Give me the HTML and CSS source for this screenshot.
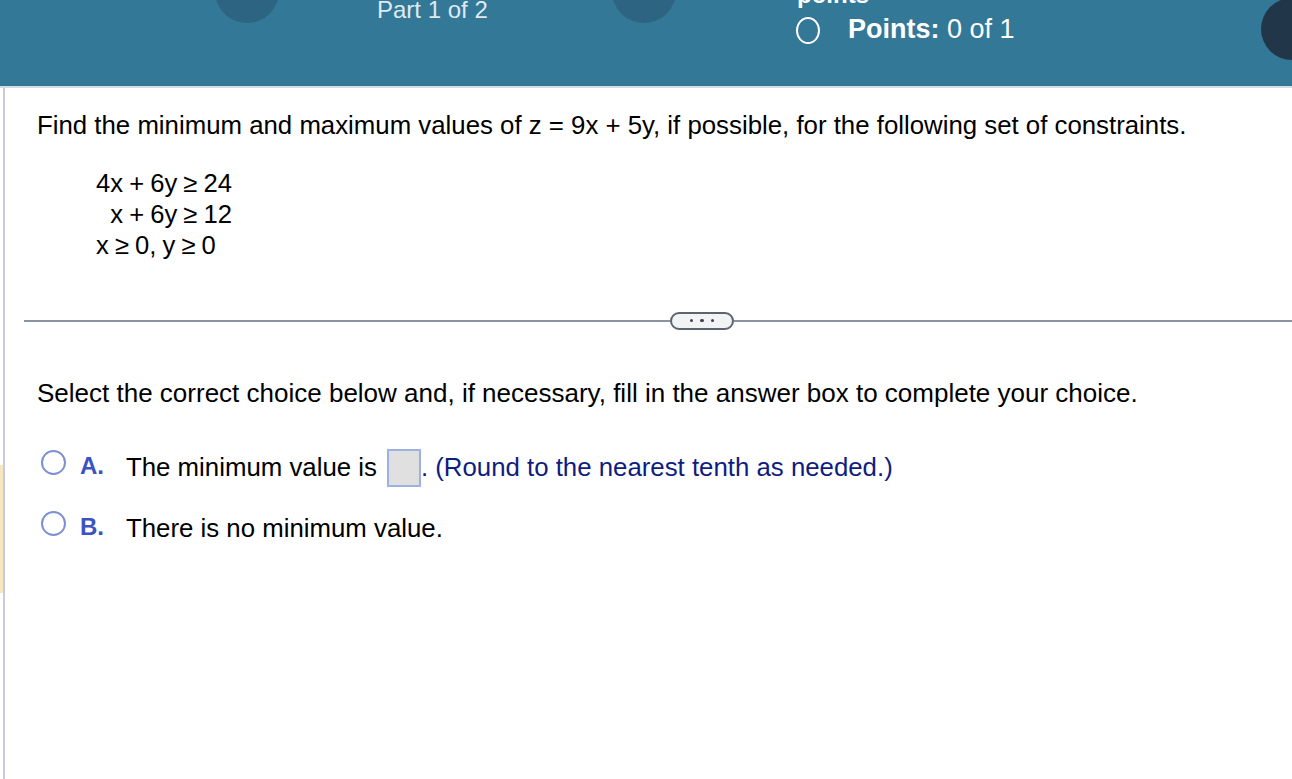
FILE: index.html
```html
<!DOCTYPE html>
<html>
<head>
<meta charset="utf-8">
<link rel="stylesheet" href="styles.css">
</head>
<body>
<div class="header">
  <div class="nav-circle first"></div>
  <div class="part">Part 1 of 2</div>
  <div class="nav-circle second"></div>
  <div class="points-block">
    <div class="points-cut">points</div>
    <div class="points-row">
      <span class="ring"></span>
      <span class="points-text"><b>Points:</b> 0 of 1</span>
    </div>
  </div>
  <div class="dark-circle"></div>
</div>
<div class="page">
  <div class="marker"></div>
  <p class="question">Find the minimum and maximum values of z = 9x + 5y, if possible, for the following set of constraints.</p>
  <div class="constraints">
    <div class="c-right">4x + 6y ≥ 24</div>
    <div class="c-right">x + 6y ≥ 12</div>
    <div class="c-left">x ≥ 0, y ≥ 0</div>
  </div>
  <div class="divider">
    <div class="line short"></div>
    <div class="pill"><span class="dot"></span><span class="dot"></span><span class="dot"></span></div>
    <div class="line long"></div>
  </div>
  <p class="instruction">Select the correct choice below and, if necessary, fill in the answer box to complete your choice.</p>
  <div class="option opt-a">
    <span class="radio"></span>
    <span class="label">A.</span>
    <span class="otext">The minimum value is <span class="answer"></span><span class="hint">. (Round to the nearest tenth as needed.)</span></span>
  </div>
  <div class="option opt-b">
    <span class="radio"></span>
    <span class="label">B.</span>
    <span class="otext">There is no minimum value.</span>
  </div>
</div>
</body>
</html>
```

FILE: styles.css
```css
* { box-sizing: border-box; }
html, body { margin: 0; padding: 0; background: #ffffff; }
body {
  font-family: "Liberation Sans", Arial, sans-serif;
  color: #000;
  width: 1292px;
  height: 779px;
  overflow: hidden;
}
.header {
  height: 88px;
  background: #337896;
  border-bottom: 2px solid #d3dde4;
  display: flex;
  align-items: flex-start;
  overflow: hidden;
}
.nav-circle {
  width: 64px;
  height: 64px;
  border-radius: 50%;
  background: #2c6482;
  margin-top: -41px;
  flex: none;
}
.nav-circle.first { margin-left: 215px; }
.nav-circle.second { margin-left: 125px; }
.part {
  margin-left: 98px;
  margin-top: -2px;
  font-size: 24px;
  line-height: 24px;
  color: #dfe9f1;
  width: 200px;
  flex: none;
  margin-right: -90px;
  white-space: nowrap;
}
.points-block {
  margin-left: 108px;
  display: flex;
  flex-direction: column;
  flex: none;
}
.points-cut {
  font-size: 24px;
  line-height: 24px;
  height: 24px;
  margin-top: -17px;
  margin-left: 13px;
  color: #ffffff;
  font-weight: bold;
}
.points-row {
  display: flex;
  align-items: center;
  margin-top: 7px;
}
.ring {
  width: 24px;
  height: 27px;
  border: 2.5px solid #ffffff;
  border-radius: 50%;
  margin-left: 12px;
  margin-top: 3px;
}
.points-text {
  margin-left: 28px;
  font-size: 27px;
  line-height: 30px;
  color: #ffffff;
  white-space: nowrap;
}
.dark-circle {
  margin-left: auto;
  margin-right: -31px;
  margin-top: -2px;
  width: 62px;
  height: 62px;
  border-radius: 50%;
  background: #22364a;
  flex: none;
}
.page {
  position: relative;
  margin-left: 3px;
  border-left: 2px solid #c9ccd8;
  height: 691px;
  padding-top: 22px;
}
.marker {
  position: absolute;
  left: -5px;
  top: 377px;
  width: 3px;
  height: 128px;
  background: #f6e7c1;
}
.question {
  margin: 0 0 0 32px;
  font-size: 25.8px;
  line-height: 30px;
  white-space: nowrap;
}
.constraints {
  display: inline-block;
  vertical-align: top;
  margin-left: 91px;
  margin-top: 27.5px;
  font-size: 25.6px;
  line-height: 31px;
  word-spacing: -1px;
}
.c-right { text-align: right; }
.c-left { text-align: left; }
.divider {
  display: flex;
  align-items: center;
  margin-left: 19px;
  margin-top: 51px;
  height: 18px;
}
.line {
  height: 2px;
  background: #8a93a0;
}
.line.short { width: 646px; }
.line.long { flex: 1; }
.pill {
  width: 64px;
  height: 18px;
  border: 2px solid #5b6570;
  border-radius: 9px;
  background: #f1f3f5;
  display: flex;
  align-items: center;
  justify-content: center;
  gap: 7px;
}
.dot {
  width: 3.5px;
  height: 3.5px;
  border-radius: 50%;
  background: #3d444c;
}
.instruction {
  margin: 48px 0 0 32px;
  font-size: 26px;
  line-height: 30px;
  white-space: nowrap;
}
.option {
  display: flex;
  align-items: center;
  height: 40px;
  font-size: 25.8px;
}
.opt-a { margin-top: 40px; }
.opt-b { margin-top: 21px; }
.radio {
  width: 25px;
  height: 25px;
  border: 2px solid #7d8fd6;
  border-radius: 50%;
  margin-left: 36px;
  flex: none;
  align-self: flex-start;
  margin-top: 2px;
}
.label {
  margin-left: 14px;
  color: #3a53c2;
  font-weight: bold;
  font-size: 24px;
  line-height: 24px;
  width: 46px;
  flex: none;
  align-self: flex-start;
  margin-top: 6px;
}
.otext {
  display: flex;
  align-items: center;
  white-space: nowrap;
}
.answer {
  display: inline-block;
  width: 34px;
  height: 38px;
  background: #e0e0e0;
  border: 2px solid #9db2e3;
  margin-left: 10px;
}
.hint { color: #0f1c80; }
```
